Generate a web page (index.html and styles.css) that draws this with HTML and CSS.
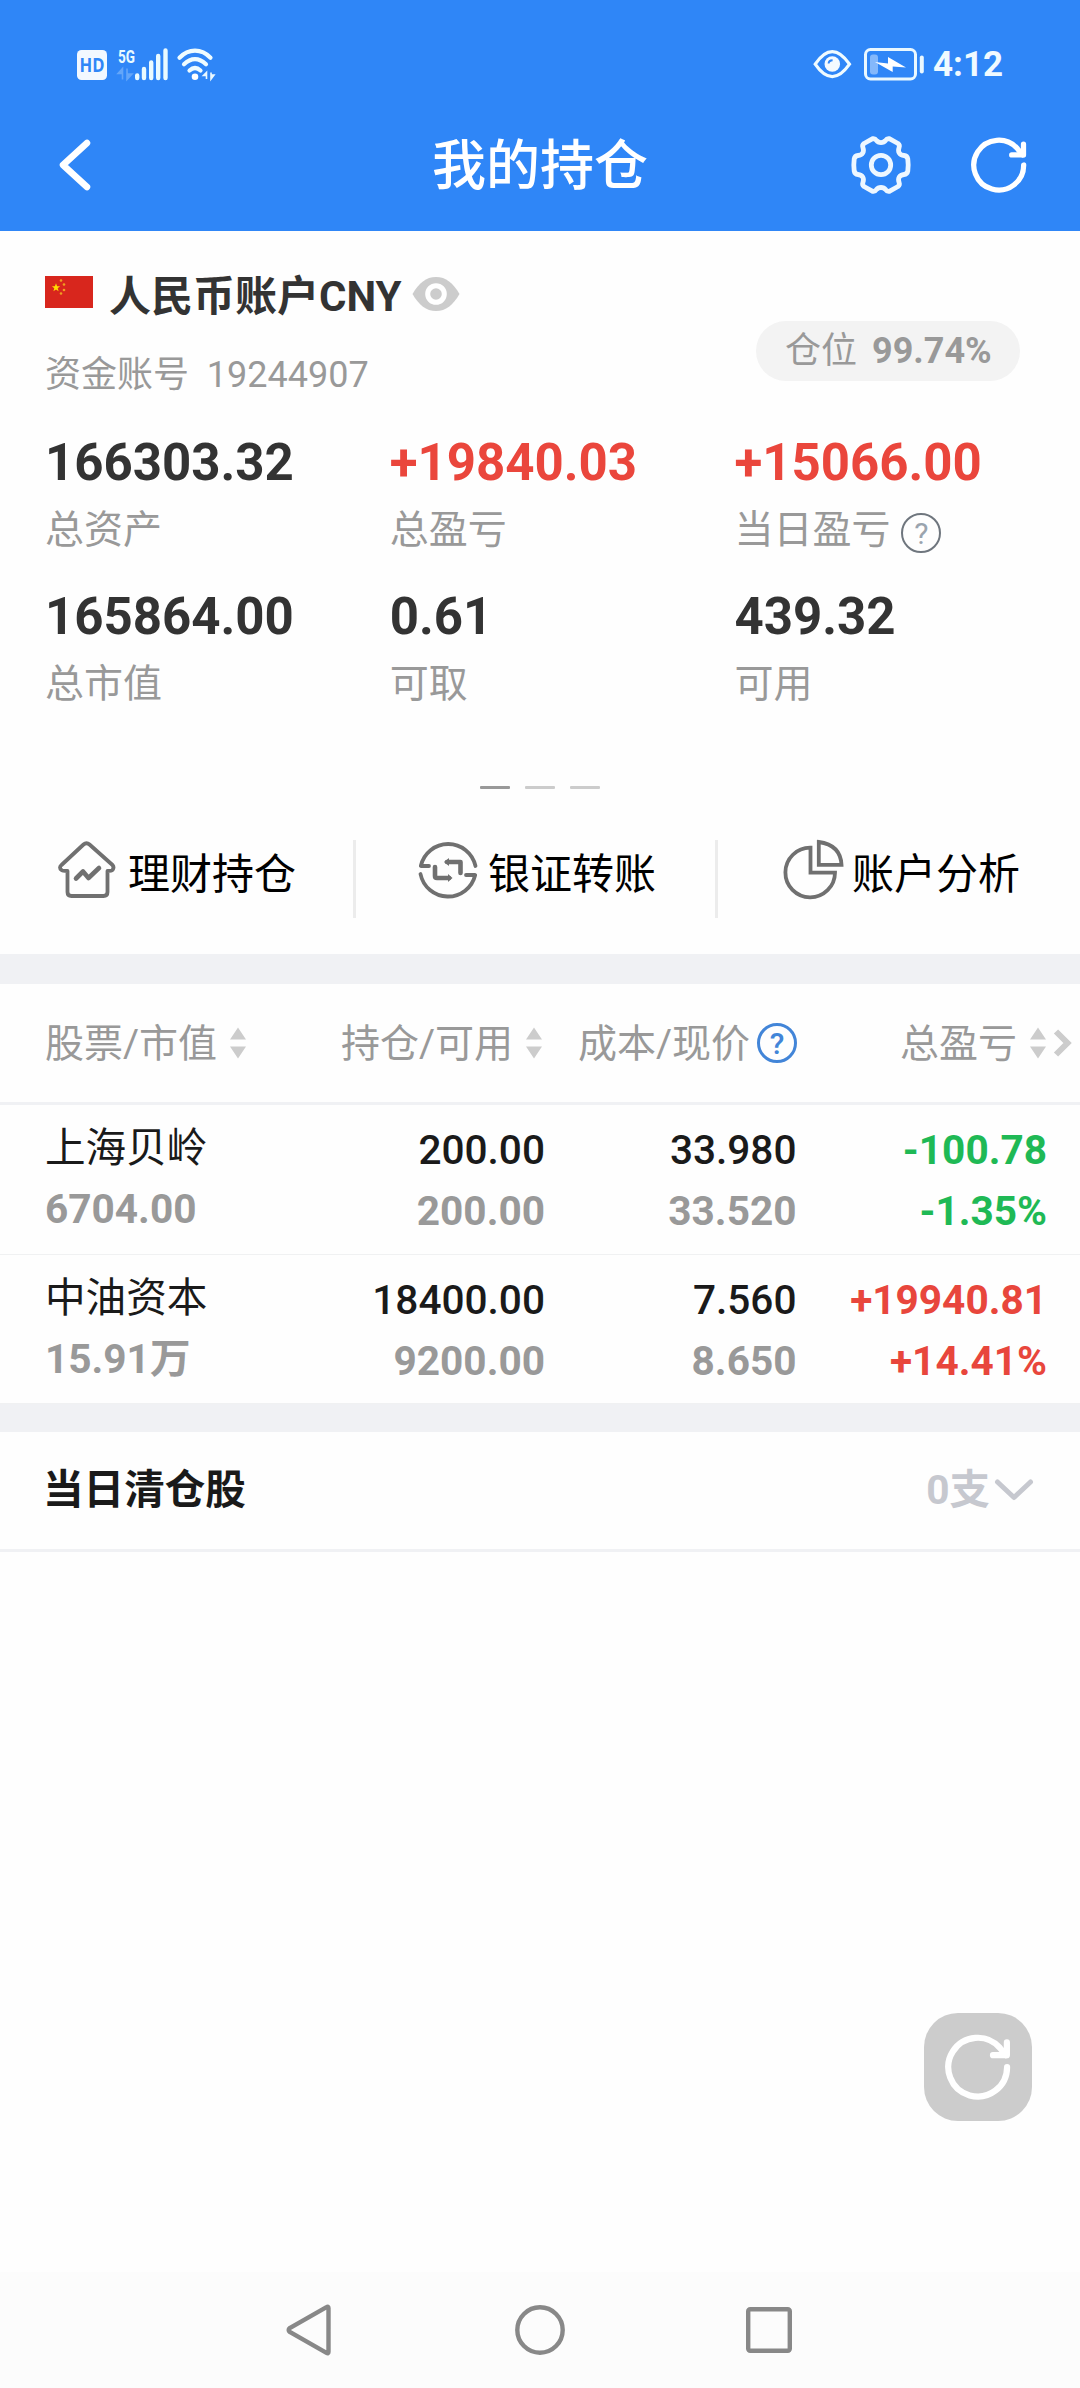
FILE: index.html
```html
<!DOCTYPE html>
<html lang="zh-CN">
<head>
<meta charset="utf-8">
<title>我的持仓</title>
<link rel="stylesheet" href="styles.css">
</head>
<body>
<svg class="defs" width="0" height="0">
  <defs>
    <symbol id="refresh" viewBox="0 0 64 64">
      <path d="M60.2 32A28.5 28.5 0 1 1 53 13.2L59 20.500"/>
      <path d="M60 8V20.500H46.500"/>
    </symbol>
    <symbol id="sort" viewBox="0 0 16 32">
      <path d="M8 0.500L16 12.500H0ZM8 31.500L16 19.500H0Z" fill="#ccc"/>
    </symbol>
  </defs>
</svg>
<main class="screen">
  <header class="top">
    <div class="status">
      <svg class="status-left" width="140" height="64" viewBox="77 30 140 64">
        <rect x="77" y="50" width="30" height="30" rx="4.500" fill="#f2f8ff"/>
        <text x="79.500" y="71.500" class="hd" textLength="25" lengthAdjust="spacingAndGlyphs">HD</text>
        <text x="118" y="62.500" class="g5" textLength="17" lengthAdjust="spacingAndGlyphs">5G</text>
        <path d="M122.500 79.500V68.500L118 73.500H122M127 68.500V79.500L132 74H127.500" class="updown dim"/>
        <g stroke="#e9faff" stroke-width="4.400" stroke-linecap="round">
          <path d="M137.200 75.500V78M144 69V78M151.200 62.500V78M158.200 56V78M165.500 50.500V78"/>
        </g>
        <g fill="none" stroke="#effcff" stroke-width="4.200" stroke-linecap="round">
          <path d="M179.500 57.800C188.500 48.300 201.500 48.300 210.500 57.800M184 64.300C191 57.500 199 57.500 206 64.300M189.500 70.500C193 67.300 197 67.300 200.500 70.500"/>
        </g>
        <circle cx="195" cy="76.700" r="3.300" fill="#fff"/>
        <path d="M206.500 79V72.500L203.500 75.500H206M211 72.500V79L214 75H211.500" class="updown"/>
      </svg>
      <div class="status-right">
        <svg width="38" height="34" viewBox="813 47 38 34" fill="none">
          <path d="M815.200 64.200C821 55.500 826 51.600 832.300 51.600S843.500 55.500 849.500 64.200C843.500 72.800 838.600 76.600 832.300 76.600S821 72.800 815.200 64.200Z" stroke="#f0fbff" stroke-width="3.200"/>
          <circle cx="832.300" cy="64" r="7.800" fill="#f4faff"/>
          <path d="M828.600 63.500Q828.800 60.300 832.600 60.200" stroke="#2f86f7" stroke-width="2"/>
        </svg>
        <svg class="battery" width="62" height="34" viewBox="863 47 62 34" fill="none">
          <rect x="865.500" y="49.500" width="50" height="29.500" rx="5" stroke="#eaf8ff" stroke-width="3"/>
          <rect x="870" y="54.500" width="8" height="20" rx="3" fill="#84b8fb"/>
          <path d="M875 62L888 63.500V57L906 67.500L892.700 66.500V72Z" fill="#fff"/>
          <rect x="919.800" y="55.500" width="4" height="18" rx="2" fill="#eaf8ff"/>
        </svg>
        <span class="clock">4:12</span>
      </div>
    </div>
    <div class="titlebar">
      <svg class="back" width="36" height="56" viewBox="0 0 36 56"><path d="M30 6L6 28L30 50"/></svg>
      <h1>我的持仓</h1>
      <div class="tools">
        <svg width="60" height="60" viewBox="-30 -30 60 60" fill="none" stroke="#eef7ff" stroke-width="4.800" stroke-linejoin="round">
          <path d="M-8.300 -26.300Q-6 -26.800 -4.500 -24.500C-2.500 -21.800 2.500 -21.800 4.500 -24.500Q6 -26.800 8.300 -26.300L17 -21.500Q19 -20 18.100 -17.500C16.500 -13 18.500 -10 23 -9.500Q26.200 -9.200 26.800 -6Q27.600 0 26.800 6Q26.200 9.200 23 9.500C18.500 10 16.500 13 18.100 17.500Q19 20 17 21.500L8.300 26.300Q6 26.800 4.500 24.500C2.500 21.800 -2.500 21.800 -4.500 24.500Q-6 26.800 -8.300 26.300L-17 21.500Q-19 20 -18.100 17.500C-16.500 13 -18.500 10 -23 9.500Q-26.200 9.200 -26.800 6Q-27.600 0 -26.800 -6Q-26.200 -9.200 -23 -9.500C-18.500 -10 -16.500 -13 -18.100 -17.500Q-19 -20 -17 -21.500Z"/>
          <circle r="9.700"/>
        </svg>
        <svg class="refresh" width="56" height="58"><use href="#refresh"/></svg>
      </div>
    </div>
  </header>

  <section class="account">
    <div class="account-head">
      <div>
        <div class="account-name">
          <svg width="48" height="32" viewBox="0 0 48 32">
            <rect width="48" height="32" fill="#d8261d"/>
            <path d="M11 7.300L12.100 10.300H15.100L12.700 12.200L13.600 15.300L11 13.400L8.400 15.300L9.300 12.200L6.900 10.300H9.900Z" fill="#ffdc00"/>
            <g fill="#f0a020"><circle cx="16" cy="4.500" r="1.300"/><circle cx="19" cy="8.500" r="1.300"/><circle cx="19" cy="14" r="1.300"/><circle cx="16" cy="17.500" r="1.300"/></g>
          </svg>
          <span>人民币账户CNY</span>
          <svg width="48" height="36" viewBox="0 0 48 36">
            <path d="M0.500 18C7 7 14 1 24 1S41 7 47.500 18C41 29 34 35 24 35S7 29 0.500 18Z" fill="#ccc"/>
            <circle cx="24" cy="18" r="8.300" fill="#ccc" stroke="#fff" stroke-width="5"/>
          </svg>
        </div>
        <div class="account-no">资金账号&nbsp; 19244907</div>
      </div>
      <div class="pill">仓位<b>99.74%</b></div>
    </div>
    <div class="figures">
      <div><strong>166303.32</strong><span>总资产</span></div>
      <div><strong class="red">+19840.03</strong><span>总盈亏</span></div>
      <div><strong class="red">+15066.00</strong><span>当日盈亏<i class="help">?</i></span></div>
      <div><strong>165864.00</strong><span>总市值</span></div>
      <div><strong>0.61</strong><span>可取</span></div>
      <div><strong>439.32</strong><span>可用</span></div>
    </div>
    <div class="dots"><i class="on"></i><i></i><i></i></div>
  </section>

  <nav class="actions">
    <a>
      <svg width="60" height="60" viewBox="0 0 60 60">
        <path d="M27 4.500Q30 1.800 33 4.500L56 25Q58 27.500 56 30Q55 31 51 31V52Q51 56 47 56H15Q11 56 11 52V31Q6 31 5 30Q2 27.500 5 25Z" transform="translate(0.500 0)"/>
        <path d="M20 38.500L27 31.500L32.500 38L43 28" class="thick"/>
      </svg><span>理财持仓</span>
    </a>
    <a>
      <svg width="60" height="60" viewBox="0 0 60 60">
        <path d="M57.500 26A28 28 0 0 0 2.800 26H11M2.500 34A28 28 0 0 0 57.200 35H48"/>
        <path d="M29 22H42.500V33M17 27V36Q17 38 19 38H31" class="thick"/>
        <path d="M31 18V26L26 22ZM30 34V42L34.500 38Z" class="solid"/>
      </svg><span>银证转账</span>
    </a>
    <a>
      <svg width="60" height="60" viewBox="0 0 60 60">
        <path d="M28.500 7.700V32.700H53A24.800 24.800 0 1 1 28.500 7.700ZM36.800 2V24.800H59.500Q58.500 5 36.800 2Z"/>
      </svg><span>账户分析</span>
    </a>
  </nav>
  <div class="band"></div>

  <section class="holdings">
    <div class="row head">
      <div><em>股票/市值</em><svg class="sort"><use href="#sort"/></svg></div>
      <div><em>持仓/可用</em><svg class="sort"><use href="#sort"/></svg></div>
      <div><em>成本/现价</em><i class="help blue">?</i></div>
      <div><em>总盈亏</em><svg class="sort"><use href="#sort"/></svg><svg class="more" width="18" height="28" viewBox="0 0 18 28"><path d="M2 2.500L13.500 14L2 25.500"/></svg></div>
    </div>
    <div class="row">
      <div><span class="name">上海贝岭</span><b>6704.00</b></div>
      <div><span>200.00</span><b>200.00</b></div>
      <div><span>33.980</span><b>33.520</b></div>
      <div class="green"><span>-100.78</span><b>-1.35%</b></div>
    </div>
    <div class="row">
      <div><span class="name">中油资本</span><b>15.91万</b></div>
      <div><span>18400.00</span><b>9200.00</b></div>
      <div><span>7.560</span><b>8.650</b></div>
      <div class="red"><span>+19940.81</span><b>+14.41%</b></div>
    </div>
  </section>
  <div class="band short"></div>

  <section class="cleared">
    <h2>当日清仓股</h2>
    <span>0支<svg width="38" height="22" viewBox="0 0 38 22"><path d="M2.500 3L19 18.500L35.500 3"/></svg></span>
  </section>

  <div class="blank">
    <button class="float"><svg class="refresh" width="66" height="66"><use href="#refresh"/></svg></button>
  </div>

  <footer class="sysnav">
    <svg width="50" height="54" viewBox="0 0 50 54"><path d="M43.500 5Q43.500 3 41.500 4.200L4.800 25Q2.500 27 4.800 29L41.500 49.800Q43.500 51 43.500 49Z"/></svg>
    <svg width="54" height="54" viewBox="0 0 54 54"><circle cx="27" cy="27" r="22.700"/></svg>
    <svg width="50" height="50" viewBox="0 0 50 50"><rect x="4.200" y="4.200" width="41.600" height="41.600" rx="2"/></svg>
  </footer>
</main>
</body>
</html>
```
FILE: styles.css
```css
* { box-sizing: border-box; margin: 0; padding: 0; }
body {
  width: 1080px;
  background: #fefefe;
  color: #333;
  font-family: Roboto, "Noto Sans CJK SC", sans-serif;
}
i, em { font-style: normal; }
svg { display: block; flex: none; overflow: visible; }
.defs { position: absolute; }
.screen { display: flex; flex-direction: column; height: 2388px; overflow: hidden; }

.top { height: 231px; background: #2f86f7; color: #fff; }
.status {
  display: flex;
  justify-content: space-between;
  height: 98px;
  padding: 30px 77px 0 77px;
}
.status-right { display: flex; padding-top: 17px; }
.battery { margin-left: 12px; }
.clock { margin-left: 8px; width: 70px; font-size: 35px; font-weight: 700; line-height: 36px; color: #f0faff; }
.hd { font: 700 19px "Open Sans", sans-serif; fill: #2f86f7; }
.g5 { font: 700 19px Roboto, sans-serif; fill: #e9faff; }
.updown { fill: #eaf8ff; stroke: #eaf8ff; stroke-width: 1.6; }
.dim { fill: #64a6f9; stroke: #64a6f9; }

.titlebar {
  display: grid;
  grid-template-columns: 1fr auto 1fr;
  align-items: center;
  height: 133px;
  padding: 0 53px 0 57px;
}
.back path { fill: none; stroke: #fff; stroke-width: 6.500; stroke-linecap: round; stroke-linejoin: round; }
h1 { padding-top: 4px; font-size: 54px; font-weight: 500; line-height: 80px; margin-left: -4px; }
.tools { display: flex; justify-content: flex-end; align-items: center; gap: 60px; }
.refresh { fill: none; stroke: #fff; stroke-width: 6; stroke-linecap: round; stroke-linejoin: round; }

.account { height: 604px; padding-left: 45px; }
.account-head { display: flex; justify-content: space-between; height: 194px; padding: 38px 60px 0 0; }
.account-name { display: flex; align-items: center; gap: 16px; height: 50px; font-size: 42px; font-weight: 700; line-height: 50px; }
.account-name span { padding-top: 5px; }
.account-name svg:first-child { margin-top: -4px; }
.account-name svg:last-child { margin: 0 0 0 -6px; }
.account-no { margin-top: 34px; color: #999; font-size: 36px; line-height: 44px; }
.pill {
  display: flex; gap: 15px;
  width: 264px; height: 60px; margin-top: 52px; padding-left: 29px;
  border-radius: 30px; background: #f3f3f3; color: #999;
  font-size: 36px; line-height: 60px; white-space: nowrap;
}
.pill b { font-weight: 700; }
.figures { display: grid; grid-template-columns: repeat(3, 344.700px); grid-auto-rows: 154px; padding-top: 1px; }
.figures strong { display: block; height: 74px; font-size: 51px; font-weight: 700; line-height: 74px; }
.figures span { display: flex; align-items: center; height: 61px; color: #999; font-size: 39px; line-height: 61px; }
.red, .red strong { color: #ea463c; }
.help {
  width: 40px; height: 40px; margin: 4px 0 0 11px; border: 2px solid #6f767e; border-radius: 50%;
  color: #9aa4ae; font-size: 30px; line-height: 37px; text-align: center;
}
.dots { display: flex; justify-content: center; gap: 15px; margin: 52px 45px 0 0; }
.dots i { width: 30px; height: 3px; background: #ccc; border-radius: 1px; }
.dots .on { background: #999; }

.actions { display: grid; grid-template-columns: 356px 362px 362px; height: 119px; color: #000; font-size: 42px; }
.actions a { display: flex; gap: 10px; height: 78px; margin-top: 5px; padding-left: 62px; line-height: 70px; border-right: 3px solid #ececec; }
.actions a:first-child { padding-left: 56px; gap: 12px; }
.actions a:last-child { padding-left: 64px; gap: 10px; border: 0; }
.actions svg { fill: none; stroke: #707070; stroke-width: 3.800; stroke-linejoin: round; stroke-linecap: round; }
.actions a:last-child svg { stroke-linejoin: miter; }
.actions .thick { stroke-width: 4.600; }
.actions .solid { fill: #707070; stroke: none; }

.band { height: 30px; background: #f0f1f4; }
.band.short { height: 28px; }

.row {
  display: grid;
  grid-template-columns: 250px 250px 251.500px 250.500px;
  height: 150px;
  padding: 20px 0 0 45px;
  border-bottom: 1px solid #f0f1f2;
  font-size: 40.600px;
  text-align: right;
  color: #1a1a1a;
}
.row > :first-child { text-align: left; }
.row:last-child { height: 149px; }
.row span, .row b { display: block; height: 61px; line-height: 50px; }
.row > :first-child b { margin-top: -2px; }
.row span { font-weight: 500; font-size: 40.600px; }
.row .name { font-weight: 400; font-size: 40.600px; line-height: 46px; }
.row b { font-weight: 700; color: #999; }
.row .green * { color: #1fb955; font-weight: 700; }
.row .red * { color: #e8463c; font-weight: 700; }
.head { height: 121px; padding-top: 0; border-bottom: 3px solid #f0f1f4; color: #999; font-size: 39px; grid-template-columns: 250px 250px 252px auto; }
.head > div { display: flex; align-items: center; justify-content: flex-end; white-space: nowrap; }
.head > div:first-child { justify-content: flex-start; }
.head > div:last-child { padding-right: 8px; }
.head em { padding-bottom: 6px; }
.sort { width: 16px; height: 32px; margin-left: 13px; margin-right: 1px; }
.head > :nth-child(2) .sort { margin-right: 3px; }
.more { margin-left: 7px; }
.more path { fill: none; stroke: #ccc; stroke-width: 6; }
.blue { border: 3px solid #4285d8; color: #4285d8; font-weight: 500; line-height: 35px; margin: 0 0 0 7px; }

.cleared {
  display: flex; align-items: center; justify-content: space-between;
  height: 120px; padding: 0 47px 8px 43px; border-bottom: 3px solid #f0f1f4;
  font-size: 40.600px; color: #1a1a1a;
}
h2 { font-size: 40.600px; font-weight: 700; }
.cleared span { display: flex; align-items: center; gap: 5px; font-weight: 700; color: #c6c8cf; }
.cleared svg { margin-top: 7px; }
.cleared path { fill: none; stroke: #c6c8cf; stroke-width: 5; stroke-linecap: round; stroke-linejoin: round; }

.blank { display: flex; flex: 1; align-items: flex-end; justify-content: flex-end; padding: 0 48px 151px; }
.float { display: grid; place-items: center; width: 108px; height: 108px; border: 0; border-radius: 34px; background: #ccc; }

.sysnav { display: flex; align-items: center; justify-content: space-between; height: 116px; padding: 0 286px 0 285px; background: #fcfcfc; }
.sysnav svg { fill: none; stroke: #888; stroke-width: 4.400; }
```
